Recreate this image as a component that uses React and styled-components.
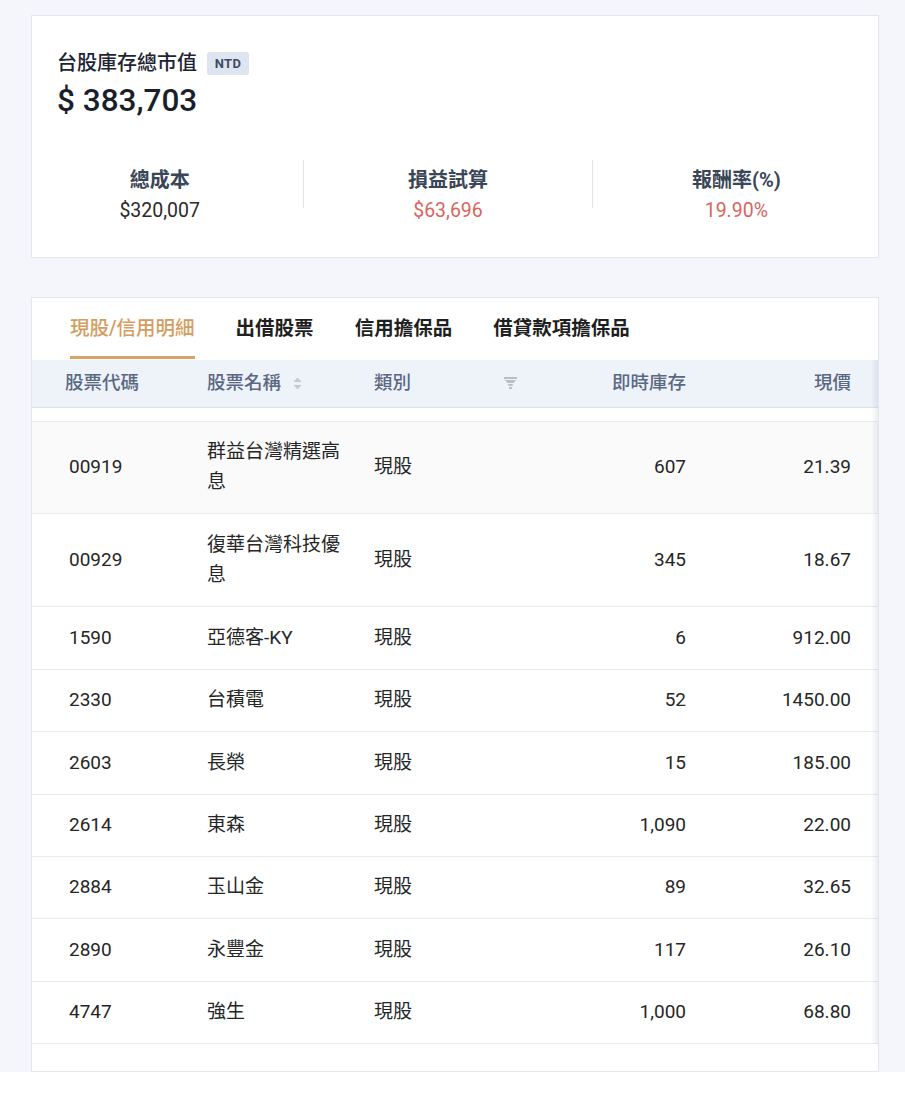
import React from "react";
import styled, { createGlobalStyle } from "styled-components";

const Global = createGlobalStyle`
  html, body { margin: 0; padding: 0; background: #ffffff; }
  body { font-family: Roboto, "Noto Sans CJK TC", sans-serif; color: #222; }
  * { box-sizing: border-box; }
`;

const Page = styled.div`
  background: #f4f6fb;
  padding: 15px 26px 0 31px;
  display: flex;
  flex-direction: column;
  gap: 39px;
`;

const Card = styled.section`
  background: #fff;
  border: 1px solid #e3e6ec;
`;

const SummaryCard = styled(Card)`
  padding: 33px 26px 32px 25px;
`;

const TitleRow = styled.div`
  display: flex;
  align-items: center;
  gap: 10px;
  height: 28px;
`;

const Title = styled.h2`
  margin: 0;
  font-size: 20px;
  line-height: 28px;
  font-weight: 500;
  color: #1c2433;
`;

const Badge = styled.span`
  display: inline-flex;
  align-items: center;
  justify-content: center;
  width: 42px;
  height: 23px;
  border-radius: 3px;
  background: #dfe5f0;
  color: #3e4b66;
  font-size: 13px;
  font-weight: 700;
  letter-spacing: 0.3px;
`;

const BigValue = styled.div`
  margin-top: 4px;
  font-size: 31.5px;
  line-height: 40px;
  font-weight: 500;
  color: #1a1f2b;
`;

const StatsRow = styled.div`
  margin: 39px -28px 0 -41px;
  display: grid;
  grid-template-columns: 1fr 1px 1fr 1px 1fr;
`;

const Stat = styled.div`
  padding-top: 6px;
  display: flex;
  flex-direction: column;
  align-items: center;
  gap: 3px;
`;

const StatDivider = styled.div`
  align-self: start;
  height: 48px;
  background: #e2e4e8;
`;

const StatLabel = styled.div`
  font-size: 20px;
  line-height: 28px;
  font-weight: 700;
  color: #3a4557;
`;

const StatValue = styled.div`
  font-size: 19.5px;
  line-height: 28px;
  color: ${(p) => (p.$up ? "#d9665d" : "#2a2a2a")};
`;

const TableCard = styled(Card)`
  display: flex;
  flex-direction: column;
`;

const TabBar = styled.nav`
  display: flex;
  gap: 41px;
  padding: 0 38px 1px;
`;

const Tab = styled.div`
  padding: 17px 0 13px;
  font-size: 19.5px;
  line-height: 28px;
  font-weight: ${(p) => (p.$active ? 500 : 700)};
  color: ${(p) => (p.$active ? "#d49d60" : "#1f1f1f")};
  border-bottom: 3px solid ${(p) => (p.$active ? "#d6a468" : "transparent")};
`;

const TableWrap = styled.div`
  position: relative;
  &::after {
    content: "";
    position: absolute;
    top: 0;
    right: 0;
    bottom: 0;
    width: 7px;
    background: linear-gradient(to right, rgba(60, 80, 140, 0), rgba(60, 80, 140, 0.1));
    pointer-events: none;
  }
`;

const Table = styled.table`
  width: 100%;
  border-collapse: collapse;
  table-layout: fixed;
`;

const Th = styled.th`
  background: #eef2f9;
  height: 47px;
  padding: 0 0 0 ${(p) => p.$pl ?? 16}px;
  padding-right: ${(p) => p.$pr ?? 0}px;
  font-size: 18.5px;
  line-height: 30px;
  font-weight: 500;
  color: #5b6882;
  text-align: ${(p) => (p.$right ? "right" : "left")};
  border-bottom: 1px solid #dde2ea;
  white-space: nowrap;
`;

const HeadInner = styled.div`
  display: flex;
  align-items: center;
  justify-content: ${(p) => (p.$spread ? "space-between" : "flex-start")};
  gap: 12px;
`;

const SpacerCell = styled.td`
  height: 14px;
  padding: 0;
  border-bottom: 1px solid #ececec;
`;

const Tr = styled.tr`
  background: ${(p) => (p.$hover ? "#fafafa" : "#fff")};
`;

const Td = styled.td`
  padding: 15.4px 0 15.4px ${(p) => p.$pl ?? 16}px;
  padding-right: ${(p) => p.$pr ?? 0}px;
  font-size: 19px;
  line-height: 30.6px;
  color: #262626;
  text-align: ${(p) => (p.$right ? "right" : "left")};
  border-bottom: 1px solid #ebebeb;
  vertical-align: middle;
`;

const Footer = styled.div`
  height: 27px;
`;

const SortIcon = () => (
  <svg width="9" height="13" viewBox="0 0 9 13" aria-hidden="true">
    <path d="M4.5 0.5 L8.5 5 H0.5 Z" fill="#c3c9d3" />
    <path d="M4.5 12.5 L8.5 8 H0.5 Z" fill="#c3c9d3" />
  </svg>
);

const FilterIcon = () => (
  <svg width="13" height="12" viewBox="0 0 13 12" aria-hidden="true">
    <path d="M0 0 H13 V2 H0 Z" fill="#b9bec8" />
    <path d="M1 3 H12 L9.5 6 H3.5 Z" fill="#b9bec8" />
    <path d="M4.3 7 H8.7 V9 H4.3 Z" fill="#b9bec8" />
    <path d="M5 10 H8 V12 H5 Z" fill="#b9bec8" />
  </svg>
);

const rows = [
  { code: "00919", name: "群益台灣精選高息", type: "現股", qty: "607", price: "21.39", hover: true },
  { code: "00929", name: "復華台灣科技優息", type: "現股", qty: "345", price: "18.67" },
  { code: "1590", name: "亞德客-KY", type: "現股", qty: "6", price: "912.00" },
  { code: "2330", name: "台積電", type: "現股", qty: "52", price: "1450.00" },
  { code: "2603", name: "長榮", type: "現股", qty: "15", price: "185.00" },
  { code: "2614", name: "東森", type: "現股", qty: "1,090", price: "22.00" },
  { code: "2884", name: "玉山金", type: "現股", qty: "89", price: "32.65" },
  { code: "2890", name: "永豐金", type: "現股", qty: "117", price: "26.10" },
  { code: "4747", name: "強生", type: "現股", qty: "1,000", price: "68.80" },
];

const tabs = ["現股/信用明細", "出借股票", "信用擔保品", "借貸款項擔保品"];

export default function App() {
  return (
    <>
      <Global />
      <Page>
        <SummaryCard>
          <TitleRow>
            <Title>台股庫存總市值</Title>
            <Badge>NTD</Badge>
          </TitleRow>
          <BigValue>$ 383,703</BigValue>
          <StatsRow>
            <Stat>
              <StatLabel>總成本</StatLabel>
              <StatValue>$320,007</StatValue>
            </Stat>
            <StatDivider />
            <Stat>
              <StatLabel>損益試算</StatLabel>
              <StatValue $up>$63,696</StatValue>
            </Stat>
            <StatDivider />
            <Stat>
              <StatLabel>報酬率(%)</StatLabel>
              <StatValue $up>19.90%</StatValue>
            </Stat>
          </StatsRow>
        </SummaryCard>

        <TableCard>
          <TabBar>
            {tabs.map((t, i) => (
              <Tab key={t} $active={i === 0}>
                {t}
              </Tab>
            ))}
          </TabBar>
          <TableWrap>
            <Table>
              <colgroup>
                <col style={{ width: 159 }} />
                <col style={{ width: 167 }} />
                <col style={{ width: 169 }} />
                <col style={{ width: 175 }} />
                <col style={{ width: 176 }} />
              </colgroup>
              <thead>
                <tr>
                  <Th $pl={33}>股票代碼</Th>
                  <Th>
                    <HeadInner>
                      股票名稱
                      <SortIcon />
                    </HeadInner>
                  </Th>
                  <Th $pr={10}>
                    <HeadInner $spread>
                      類別
                      <FilterIcon />
                    </HeadInner>
                  </Th>
                  <Th $right $pl={0} $pr={16}>
                    即時庫存
                  </Th>
                  <Th $right $pl={0} $pr={27}>
                    現價
                  </Th>
                </tr>
              </thead>
              <tbody>
                <tr>
                  <SpacerCell colSpan={5} />
                </tr>
                {rows.map((r) => (
                  <Tr key={r.code} $hover={r.hover}>
                    <Td $pl={37}>{r.code}</Td>
                    <Td>{r.name}</Td>
                    <Td>{r.type}</Td>
                    <Td $right $pl={0} $pr={16}>
                      {r.qty}
                    </Td>
                    <Td $right $pl={0} $pr={27}>
                      {r.price}
                    </Td>
                  </Tr>
                ))}
              </tbody>
            </Table>
          </TableWrap>
          <Footer />
        </TableCard>
      </Page>
    </>
  );
}
